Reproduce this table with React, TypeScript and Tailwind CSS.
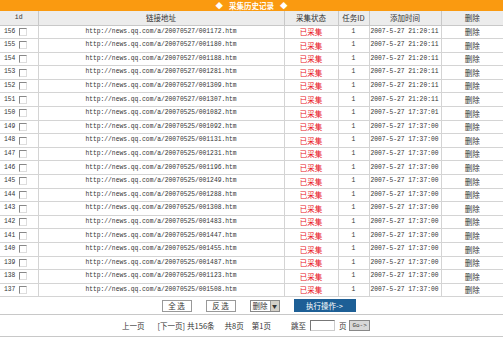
import React from 'react';

const rows = [
  { id: 156, url: '20070527/001172', time: '2007-5-27 21:20:11' },
  { id: 155, url: '20070527/001180', time: '2007-5-27 21:20:11' },
  { id: 154, url: '20070527/001188', time: '2007-5-27 21:20:11' },
  { id: 153, url: '20070527/001281', time: '2007-5-27 21:20:11' },
  { id: 152, url: '20070527/001309', time: '2007-5-27 21:20:11' },
  { id: 151, url: '20070527/001307', time: '2007-5-27 21:20:11' },
  { id: 150, url: '20070525/001082', time: '2007-5-27 17:37:01' },
  { id: 149, url: '20070525/001092', time: '2007-5-27 17:37:00' },
  { id: 148, url: '20070525/001131', time: '2007-5-27 17:37:00' },
  { id: 147, url: '20070525/001231', time: '2007-5-27 17:37:00' },
  { id: 146, url: '20070525/001196', time: '2007-5-27 17:37:00' },
  { id: 145, url: '20070525/001249', time: '2007-5-27 17:37:00' },
  { id: 144, url: '20070525/001288', time: '2007-5-27 17:37:00' },
  { id: 143, url: '20070525/001308', time: '2007-5-27 17:37:00' },
  { id: 142, url: '20070525/001483', time: '2007-5-27 17:37:00' },
  { id: 141, url: '20070525/001447', time: '2007-5-27 17:37:00' },
  { id: 140, url: '20070525/001455', time: '2007-5-27 17:37:00' },
  { id: 139, url: '20070525/001487', time: '2007-5-27 17:37:00' },
  { id: 138, url: '20070525/001123', time: '2007-5-27 17:37:00' },
  { id: 137, url: '20070525/001508', time: '2007-5-27 17:37:00' },
];

const cjk = "font-['SimSun','Noto_Sans_CJK_SC',sans-serif]";
const mono = "font-['Liberation_Mono',monospace]";

export default function App() {
  return (
    <div className={`w-[503px] h-[340px] bg-white text-[#333] overflow-hidden ${cjk}`}>
      {/* title bar */}
      <div className="h-[11px] bg-[#fa9a10] flex items-center justify-center text-white text-[7.5px] font-bold leading-none">
        <span className="mr-[6px]">◆</span>
        <span>采集历史记录</span>
        <span className="ml-[6px]">◆</span>
      </div>

      <table className="w-[503px] border-collapse table-fixed">
        <colgroup>
          <col className="w-[38px]" />
          <col className="w-[246px]" />
          <col className="w-[54px]" />
          <col className="w-[31px]" />
          <col className="w-[72px]" />
          <col className="w-[62px]" />
        </colgroup>
        <thead>
          <tr className="h-[14px] bg-[#ececec] text-[7.5px] leading-none">
            <th className={`font-normal border-r border-b border-[#c8c8c8] ${mono} text-[6.5px]`}>id</th>
            <th className="font-normal border-r border-b border-[#c8c8c8]">链接地址</th>
            <th className="font-normal border-r border-b border-[#c8c8c8]">采集状态</th>
            <th className="font-normal border-r border-b border-[#c8c8c8]">任务ID</th>
            <th className="font-normal border-r border-b border-[#c8c8c8]">添加时间</th>
            <th className="font-normal border-b border-[#c8c8c8]">删除</th>
          </tr>
        </thead>
        <tbody>
          {rows.map(r => (
            <tr key={r.id} className="h-[13.6px] text-[7.5px] leading-none">
              <td className="border-r border-b border-[#d4d4d4] pl-[4px]">
                <div className="flex items-center">
                  <span className={`${mono} text-[6.3px] w-[15px]`}>{r.id}</span>
                  <span className="w-[8px] h-[8px] border border-[#888] border-r-[#ddd] border-b-[#ddd] bg-white" />
                </div>
              </td>
              <td className={`border-r border-b border-[#d4d4d4] text-center ${mono} text-[6.3px]`}>
                http://news.qq.com/a/{r.url}.htm
              </td>
              <td className="border-r border-b border-[#d4d4d4] text-center text-[#e8141b]">已采集</td>
              <td className={`border-r border-b border-[#d4d4d4] text-center ${mono} text-[6.3px]`}>1</td>
              <td className={`border-r border-b border-[#d4d4d4] pl-[1px] ${mono} text-[6.3px]`}>{r.time}</td>
              <td className="border-b border-[#d4d4d4] text-center">删除</td>
            </tr>
          ))}
        </tbody>
      </table>

      {/* action buttons */}
      <div className="h-[18px] flex items-center justify-center gap-[14px] text-[7.5px] leading-none pl-[14px] border-b border-[#c8c8c8]">
        <button className="w-[30px] h-[12px] border border-[#999] bg-white flex items-center justify-center">全 选</button>
        <button className="w-[30px] h-[12px] border border-[#999] bg-white flex items-center justify-center">反 选</button>
        <div className="flex items-center h-[12px] border border-[#888] bg-white">
          <span className="px-[2px]">删除</span>
          <span className="w-[9px] h-[10px] bg-[#d4d0c8] flex items-center justify-center text-[5px] border-l border-[#999]">▼</span>
        </div>
        <button className="w-[62px] h-[13px] bg-[#1d5f96] text-white flex items-center justify-center">执行操作-&gt;</button>
      </div>

      {/* pagination */}
      <div className="h-[22px] flex items-center text-[7.5px] leading-none border-b border-[#c8c8c8] pl-[122px]">
        <span>上一页</span>
        <span className="ml-[13px]">[下一页]</span>
        <span className="ml-[2px]">共156条</span>
        <span className="ml-[10px]">共8页</span>
        <span className="ml-[8px]">第1页</span>
        <span className="ml-[20px]">跳至</span>
        <span className="ml-[4px] w-[25px] h-[11px] border border-[#777] border-r-[#ccc] border-b-[#ccc] bg-white" />
        <span className="ml-[4px]">页</span>
        <span className={`ml-[3px] h-[11px] px-[2px] border border-[#888] bg-[#d8d8d8] flex items-center ${mono} text-[6px]`}>Go-&gt;</span>
      </div>
    </div>
  );
}
